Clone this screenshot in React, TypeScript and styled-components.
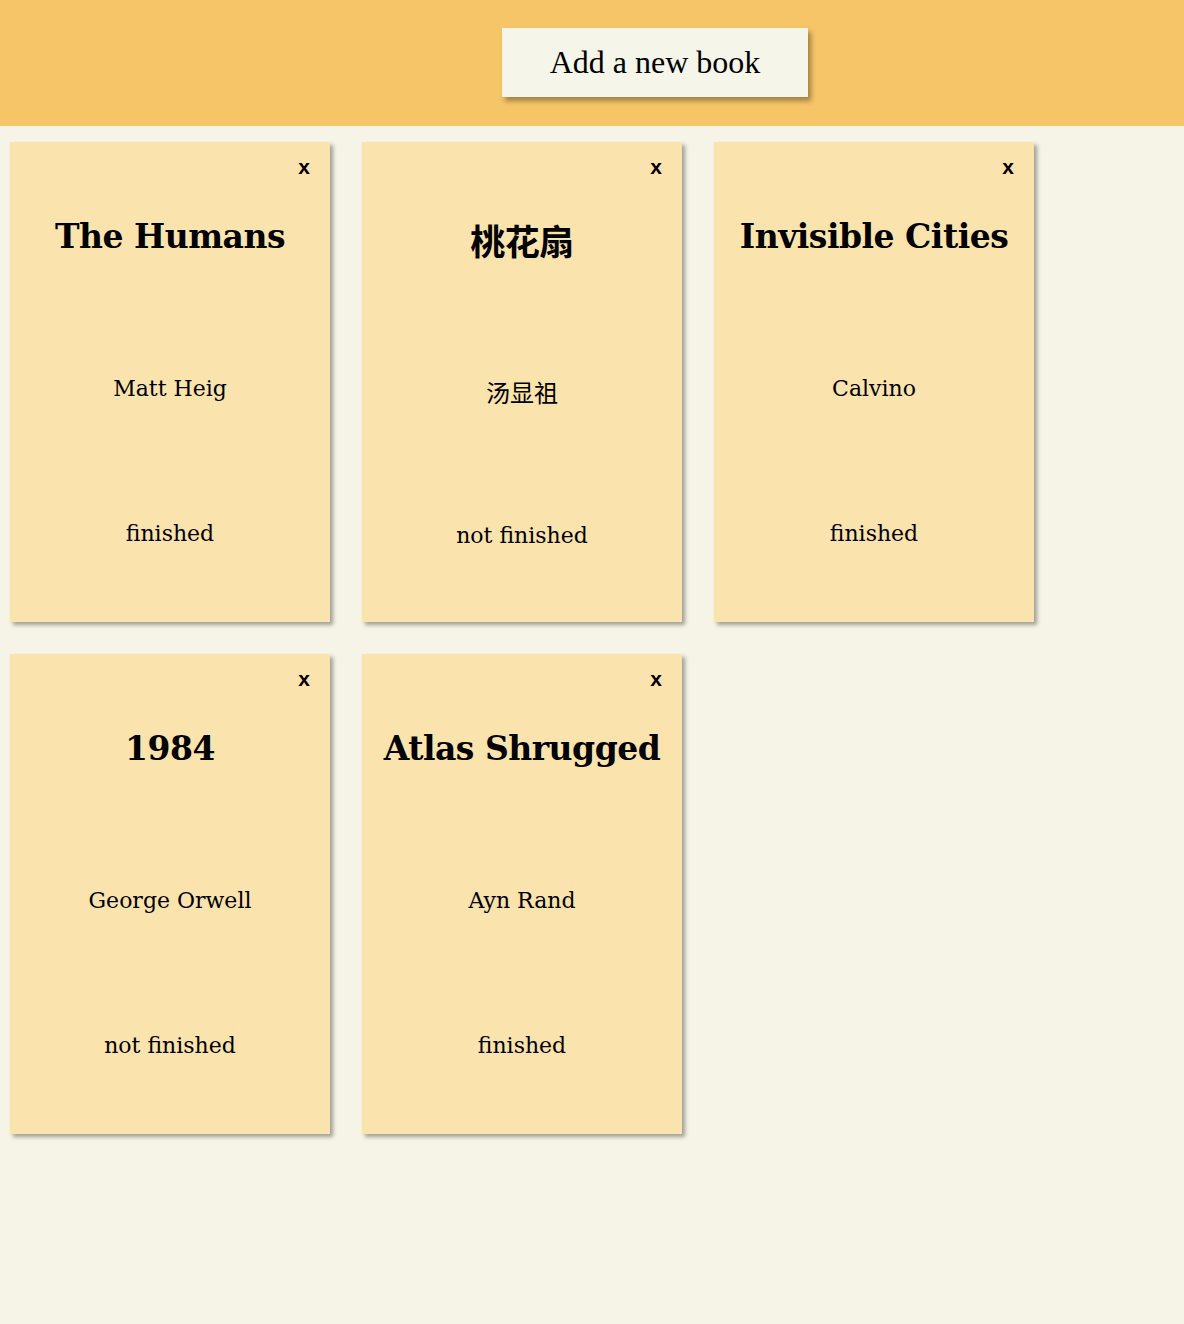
import React from 'react';
import styled, { createGlobalStyle } from 'styled-components';

type TBook = {
  title: string;
  author: string;
  finished: boolean;
};

const books: TBook[] = [
  { title: 'The Humans', author: 'Matt Heig', finished: true },
  { title: '桃花扇', author: '汤显祖', finished: false },
  { title: 'Invisible Cities', author: 'Calvino', finished: true },
  { title: '1984', author: 'George Orwell', finished: false },
  { title: 'Atlas Shrugged', author: 'Ayn Rand', finished: true },
];

// rough check for Chinese titles, they get a slightly larger face
const isCjk = (text: string) => /[\u4e00-\u9fff]/.test(text);

const GlobalStyle = createGlobalStyle`
  html, body {
    margin: 0;
    padding: 0;
    background: #f5f4e7;
    min-height: 100%;
  }
  body {
    font-family: "DejaVu Serif", "Noto Sans CJK SC", serif;
    color: #000;
  }
`;

const Header = styled.header`
  height: 126px;
  background: #f6c567;
  display: flex;
  align-items: center;
  justify-content: center;
  padding-left: 126px;
  box-sizing: border-box;
`;

const AddButton = styled.button`
  width: 306px;
  height: 69px;
  border: none;
  background: #f5f5e9;
  font-family: "Liberation Serif", "Noto Sans CJK SC", serif;
  font-size: 32px;
  color: #000;
  box-shadow: 3px 4px 5px rgba(0, 0, 0, 0.35);
  cursor: pointer;
  margin-top: -2px;
`;

const Shelf = styled.main`
  display: grid;
  grid-template-columns: repeat(3, 320px);
  gap: 32px;
  padding: 16px 10px 40px;
`;

const Card = styled.article<{ $cjk?: boolean }>`
  width: 320px;
  height: 480px;
  background: #fbe3ad;
  box-shadow: 3px 3px 4px rgba(0, 0, 0, 0.35);
  display: grid;
  grid-template-rows: ${p => (p.$cjk ? '52px 90px 214px 74px 1fr' : '52px 84px 220px 70px 1fr')};
  text-align: center;
`;

const CloseRow = styled.div`
  display: flex;
  justify-content: flex-end;
  align-items: center;
  padding: 0 20px 4px 0;
`;

const CloseButton = styled.button`
  border: none;
  background: none;
  padding: 0;
  font-family: "Liberation Sans", Arial, sans-serif;
  font-weight: bold;
  font-size: 21px;
  line-height: 1;
  color: #000;
  cursor: pointer;
`;

const Cell = styled.div`
  display: flex;
  align-items: center;
  justify-content: center;
`;

const Title = styled.h2<{ $cjk?: boolean }>`
  margin: 0;
  font-family: "DejaVu Serif", "Noto Sans CJK SC", serif;
  font-weight: bold;
  font-size: ${p => (p.$cjk ? '35px' : '33px')};
  letter-spacing: -0.5px;
`;

const Line = styled.p<{ $cjk?: boolean }>`
  margin: 0;
  font-size: ${p => (p.$cjk ? '24px' : '22px')};
`;

const BookCard = ({ book }: { book: TBook }) => {
  const cjk = isCjk(book.title);
  return (
    <Card $cjk={cjk}>
      <CloseRow>
        <CloseButton>x</CloseButton>
      </CloseRow>
      <Cell>
        <Title $cjk={cjk}>{book.title}</Title>
      </Cell>
      <Cell>
        <Line $cjk={cjk}>{book.author}</Line>
      </Cell>
      <Cell>
        <Line>{book.finished ? 'finished' : 'not finished'}</Line>
      </Cell>
    </Card>
  );
};

export default function App() {
  return (
    <>
      <GlobalStyle />
      <Header>
        <AddButton>Add a new book</AddButton>
      </Header>
      <Shelf>
        {books.map(book => (
          <BookCard key={book.title} book={book} />
        ))}
      </Shelf>
    </>
  );
}
